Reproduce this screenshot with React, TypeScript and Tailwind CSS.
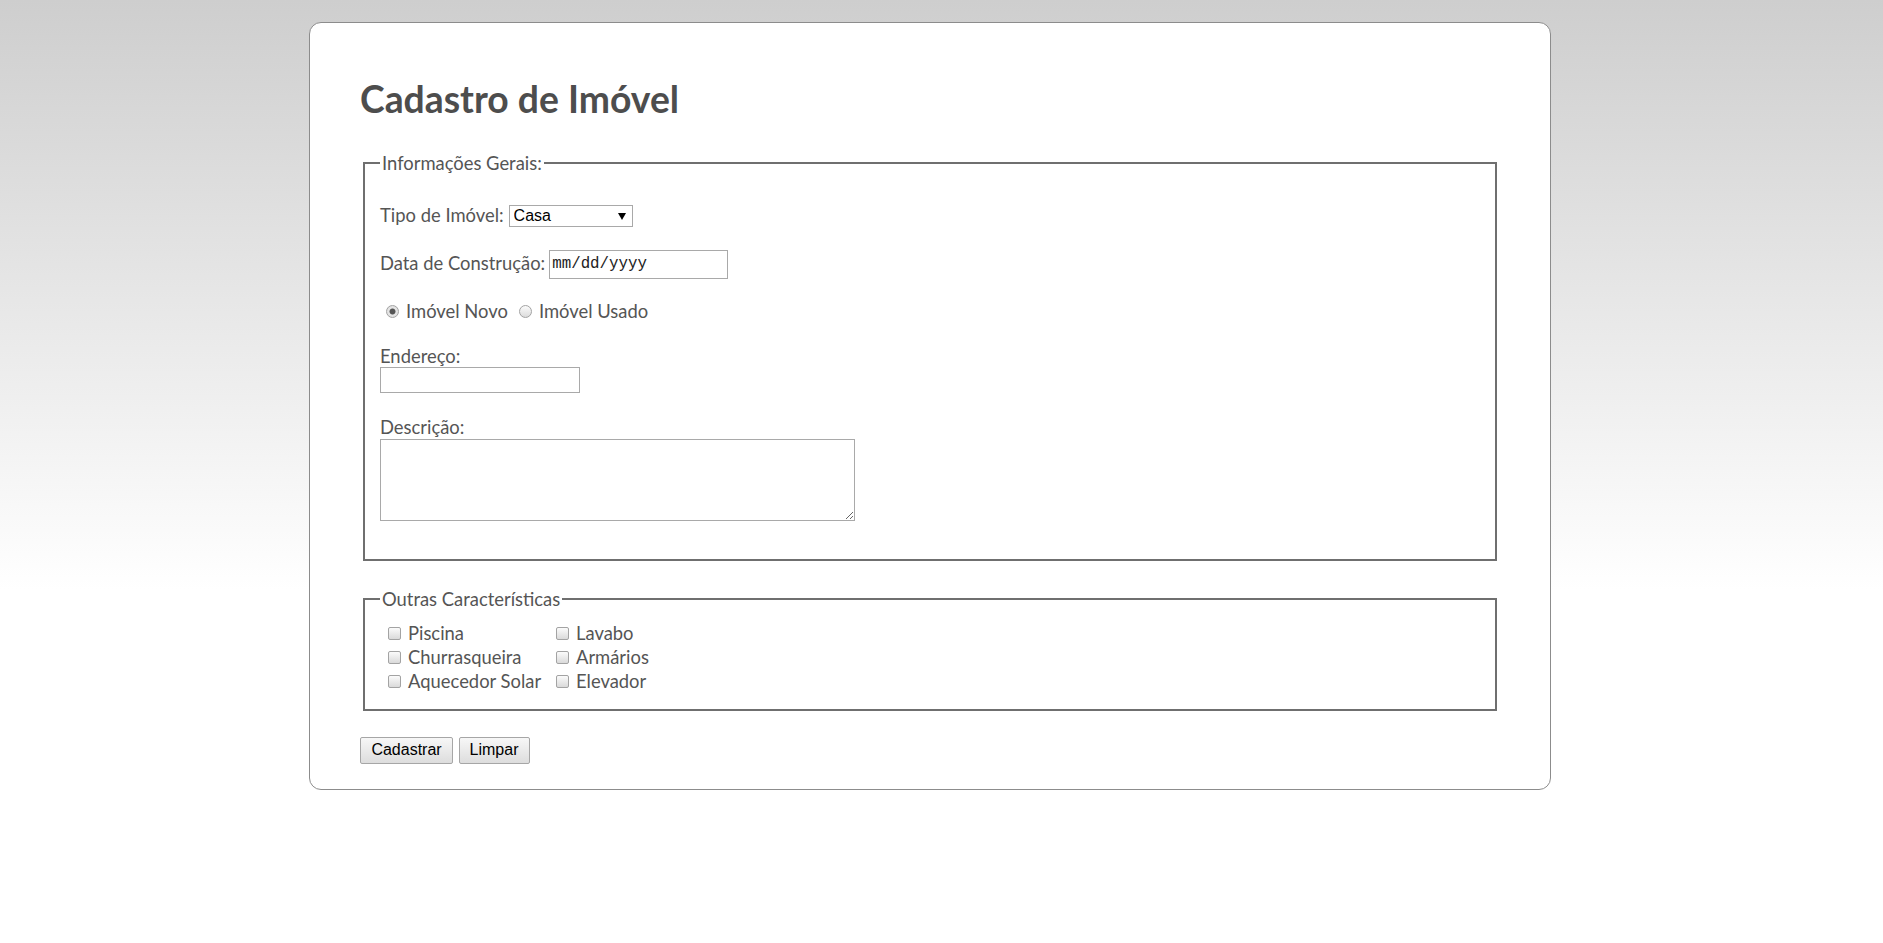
import React from "react";

function Radio({ checked, name }: { checked?: boolean; name: string }) {
  return (
    <input
      type="radio"
      name={name}
      defaultChecked={checked}
      className="m-0 h-[13px] w-[13px] shrink-0 appearance-none rounded-full border border-[#a3a3a3] bg-[linear-gradient(180deg,#fbfbfb,#dcdcdc)] checked:bg-[radial-gradient(circle,#555_0,#555_2.6px,#e6e6e6_3.4px,#dcdcdc_100%)]"
    />
  );
}

function Check({ label }: { label: string }) {
  return (
    <label className="flex h-[24px] items-center gap-[7px]">
      <input
        type="checkbox"
        className="m-0 h-[13px] w-[13px] shrink-0 appearance-none rounded-[2px] border border-[#a3a3a3] bg-[linear-gradient(180deg,#fbfbfb,#dadada)]"
      />
      <span className="-mt-[2px]">{label}</span>
    </label>
  );
}

export default function App() {
  return (
    <div className="min-h-[943px] w-full bg-[linear-gradient(180deg,#cecece_0px,#ffffff_590px)] pt-[22px] font-['Lato',sans-serif] text-[#555]">
      <div className="ml-[309px] w-[1242px] rounded-[12px] border border-[#8c8c8c] bg-white px-[50px] pt-[53px] pb-[25px]">
        <h1 className="text-[37.3px] leading-[46px] font-bold text-[#4d4d4d]">Cadastro de Imóvel</h1>
        <form className="text-[18.4px] leading-[24px]">
          <fieldset className="mx-[3px] mt-[28.6px] border-2 border-[#6f6f6f] px-[15px] pb-[38px]">
            <legend className="px-[2px] leading-[24px]">Informações Gerais:</legend>

            <div className="mt-[30px] flex h-[23px] items-center gap-[5px]">
              <span className="-mt-[2px]">Tipo de Imóvel:</span>
              <div className="relative">
                <select className="block h-[22px] w-[124px] appearance-none border border-[#a9a9a9] bg-white pl-[4px] font-['Liberation_Sans',sans-serif] text-[16px] leading-[20px] text-black">
                  <option>Casa</option>
                  <option>Apartamento</option>
                </select>
                <svg className="pointer-events-none absolute right-[7px] top-[8px]" width="8" height="7" viewBox="0 0 8 7">
                  <path d="M0 0 H8 L4 7 Z" fill="#000" />
                </svg>
              </div>
            </div>

            <div className="mt-[22px] flex h-[29px] items-center gap-[4px]">
              <span className="-mt-[2px]">Data de Construção:</span>
              <input
                type="text"
                placeholder="mm/dd/yyyy"
                className="h-[29px] w-[179px] border border-[#a9a9a9] bg-white pl-[2px] font-['Liberation_Mono',monospace] text-[15.8px] text-[#222] placeholder:text-[#222]"
              />
            </div>

            <div className="mt-[20.5px] flex h-[24px] items-center pl-[6px]">
              <Radio name="estado" checked />
              <span className="ml-[7px] -mt-[1px]">Imóvel Novo</span>
              <span className="ml-[11px] flex"><Radio name="estado" /></span>
              <span className="ml-[7px] -mt-[1px]">Imóvel Usado</span>
            </div>

            <label className="mt-[21.7px] block leading-[22px]">Endereço:</label>
            <input type="text" className="block h-[26px] w-[200px] border border-[#a9a9a9] bg-white" />

            <label className="mt-[23.5px] block leading-[22px]">Descrição:</label>
            <textarea className="mt-[1px] block h-[82px] w-[475px] border border-[#a9a9a9] bg-white" />
          </fieldset>

          <fieldset className="mx-[3px] mt-[26px] border-2 border-[#6f6f6f] px-[15px] pb-[15px]">
            <legend className="px-[2px] leading-[24px]">Outras Características</legend>
            <div className="mt-[10.7px] grid grid-cols-[168px_auto] justify-start pl-[8px]">
              <Check label="Piscina" />
              <Check label="Lavabo" />
              <Check label="Churrasqueira" />
              <Check label="Armários" />
              <Check label="Aquecedor Solar" />
              <Check label="Elevador" />
            </div>
          </fieldset>

          <div className="mt-[26px] flex gap-[5.5px] font-['Liberation_Sans',sans-serif] text-[16px] text-black">
            <button type="button" className="h-[27px] w-[93px] rounded-[2px] border border-[#a6a6a6] bg-[linear-gradient(180deg,#f7f7f7,#dddddd)]">
              Cadastrar
            </button>
            <button type="button" className="h-[27px] w-[71px] rounded-[2px] border border-[#a6a6a6] bg-[linear-gradient(180deg,#f7f7f7,#dddddd)]">
              Limpar
            </button>
          </div>
        </form>
      </div>
    </div>
  );
}
